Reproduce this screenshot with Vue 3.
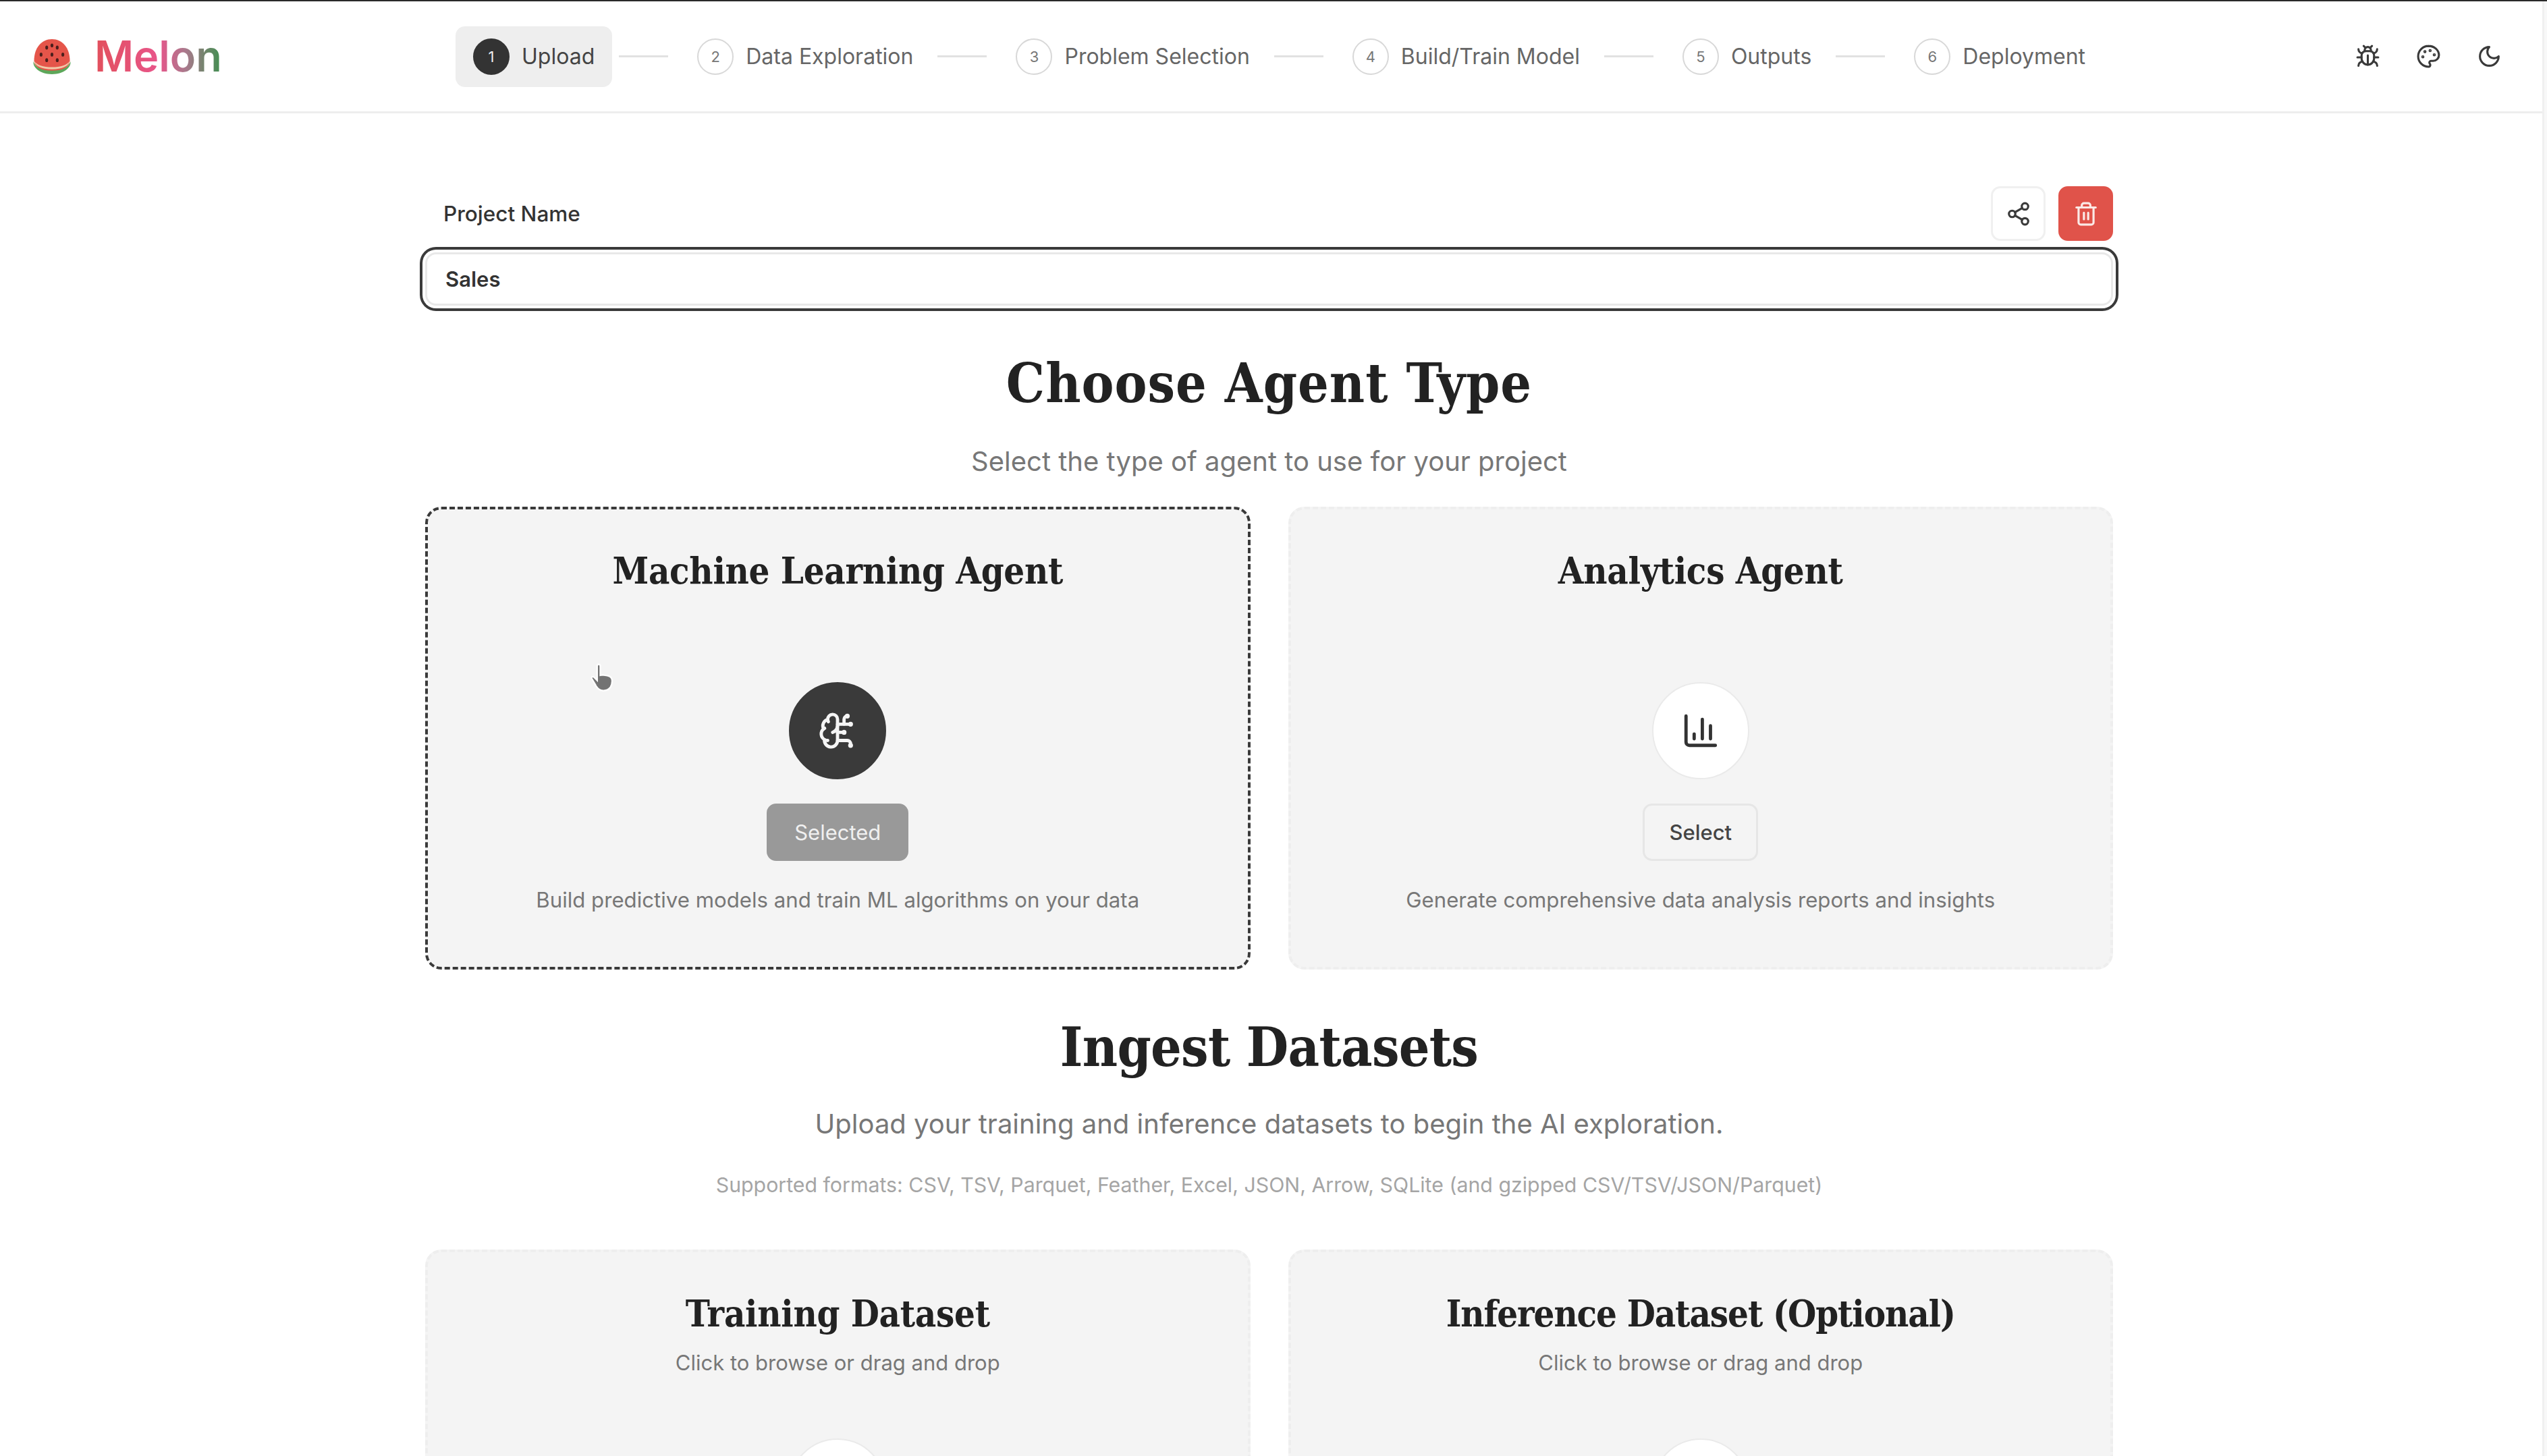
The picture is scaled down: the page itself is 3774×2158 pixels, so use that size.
<template>
  <div class="page">
    <div class="frame">
      <div class="top-strip"></div>
      <header class="header">
        <div class="brand">
          <svg class="brand__icon" viewBox="0 0 55 50">
            <path d="M2 31C2 12 13 0 27.500 0S53 12 53 31c0 8-11 16-25.500 16S2 39 2 31Z" fill="#e5554a" />
            <path d="M1 32c3 9 13 13 26.500 13S51 41 54 32c1 8-9 18-26.500 18S0 40 1 32Z" fill="#5da75a" />
            <path d="M2 31c4 6 13 9 25.500 9S49 37 53 31c-1 7-11 12-25.500 12S3 38 2 31Z" fill="#f0c9a8" />
            <ellipse v-for="seed in seeds" :key="seed.x + '-' + seed.y" :cx="seed.x" :cy="seed.y" rx="2" ry="2.800" fill="#4a1f1c" />
          </svg>
          <span class="brand__name">Melon</span>
        </div>

        <nav class="steps">
          <template v-for="(step, i) in steps" :key="step">
            <div class="step" :class="{ 'step--active': i === 0 }">
              <span class="step__num">{{ i + 1 }}</span>
              <span class="step__label">{{ step }}</span>
            </div>
            <span v-if="i < steps.length - 1" class="step__line"></span>
          </template>
        </nav>

        <div class="header__tools">
          <svg class="icon tool" viewBox="0 0 24 24">
            <path d="m8 2 1.880 1.880" /><path d="M14.120 3.880 16 2" />
            <path d="M9 7.130v-1a3.003 3.003 0 1 1 6 0v1" />
            <path d="M12 20c-3.300 0-6-2.700-6-6v-3a4 4 0 0 1 4-4h4a4 4 0 0 1 4 4v3c0 3.300-2.700 6-6 6" />
            <path d="M12 20v-9" /><path d="M6.530 9C4.600 8.800 3 7.100 3 5" /><path d="M6 13H2" />
            <path d="M3 21c0-2.100 1.700-3.900 3.800-4" /><path d="M20.970 5c0 2.100-1.600 3.800-3.500 4" />
            <path d="M22 13h-4" /><path d="M17.200 17c2.100.1 3.800 1.900 3.800 4" />
          </svg>
          <svg class="icon tool" viewBox="0 0 24 24">
            <circle cx="13.500" cy="6.500" r=".5" fill="currentColor" />
            <circle cx="17.500" cy="10.500" r=".5" fill="currentColor" />
            <circle cx="8.500" cy="7.500" r=".5" fill="currentColor" />
            <circle cx="6.500" cy="12.500" r=".5" fill="currentColor" />
            <path d="M12 2C6.500 2 2 6.500 2 12s4.500 10 10 10c.926 0 1.648-.746 1.648-1.688 0-.437-.18-.835-.437-1.125-.29-.289-.438-.652-.438-1.125a1.640 1.640 0 0 1 1.668-1.668h1.996c3.051 0 5.555-2.503 5.555-5.554C21.965 6.012 17.461 2 11.994 2z" />
          </svg>
          <svg class="icon tool" viewBox="0 0 24 24">
            <path d="M12 3a6 6 0 0 0 9 9 9 9 0 1 1-9-9Z" />
          </svg>
        </div>
      </header>

      <main class="content">
        <div class="project">
          <div class="project__row">
            <label class="project__label">Project Name</label>
            <div class="project__actions">
              <button class="square-btn">
                <svg class="icon icon--share" viewBox="0 0 24 24">
                  <circle cx="18" cy="5" r="3" /><circle cx="6" cy="12" r="3" /><circle cx="18" cy="19" r="3" />
                  <path d="m8.590 13.510 6.830 3.980" /><path d="m15.410 6.510-6.820 3.980" />
                </svg>
              </button>
              <button class="square-btn square-btn--danger">
                <svg class="icon icon--share" viewBox="0 0 24 24">
                  <path d="M3 6h18" /><path d="M19 6v14c0 1-1 2-2 2H7c-1 0-2-1-2-2V6" />
                  <path d="M8 6V4c0-1 1-2 2-2h4c1 0 2 1 2 2v2" />
                  <path d="M10 11v6" /><path d="M14 11v6" />
                </svg>
              </button>
            </div>
          </div>
          <input class="project__input" value="Sales" />
        </div>

        <h1 class="section-title section-title--agent">Choose Agent Type</h1>
        <p class="section-sub">Select the type of agent to use for your project</p>

        <div class="card-grid">
          <div class="card card--selected">
            <h2 class="card__title">Machine Learning Agent</h2>
            <div class="card__circle card__circle--dark">
              <svg class="icon icon--big" viewBox="0 0 24 24">
                <path d="M12 5a3 3 0 1 0-5.997.125 4 4 0 0 0-2.526 5.770 4 4 0 0 0 .556 6.588A4 4 0 1 0 12 18Z" />
                <path d="M9 13a4.500 4.500 0 0 0 3-4" /><path d="M6.003 5.125A3 3 0 0 0 6.401 6.500" />
                <path d="M3.477 10.896a4 4 0 0 1 .585-.396" /><path d="M6 18a4 4 0 0 1-1.967-.516" />
                <path d="M12 13h4" /><path d="M12 18h6a2 2 0 0 1 2 2v1" /><path d="M12 8h8" />
                <path d="M16 8V5a2 2 0 0 1 2-2" />
                <circle cx="16" cy="13" r=".5" /><circle cx="18" cy="3" r=".5" />
                <circle cx="20" cy="21" r=".5" /><circle cx="20" cy="8" r=".5" />
              </svg>
            </div>
            <button class="card__btn card__btn--selected">Selected</button>
            <p class="card__desc">Build predictive models and train ML algorithms on your data</p>
          </div>

          <div class="card">
            <h2 class="card__title">Analytics Agent</h2>
            <div class="card__circle">
              <svg class="icon icon--big" viewBox="0 0 24 24">
                <path d="M3 3v16a2 2 0 0 0 2 2h16" /><path d="M18 17V9" /><path d="M13 17V5" /><path d="M8 17v-3" />
              </svg>
            </div>
            <button class="card__btn">Select</button>
            <p class="card__desc">Generate comprehensive data analysis reports and insights</p>
          </div>
        </div>

        <h1 class="section-title section-title--ingest">Ingest Datasets</h1>
        <p class="section-sub section-sub--second">Upload your training and inference datasets to begin the AI exploration.</p>
        <p class="formats">Supported formats: CSV, TSV, Parquet, Feather, Excel, JSON, Arrow, SQLite (and gzipped CSV/TSV/JSON/Parquet)</p>

        <div class="card-grid card-grid--upload">
          <div v-for="item in uploads" :key="item.title" class="card card--upload">
            <h2 class="card__title" :class="item.titleClass">{{ item.title }}</h2>
            <p class="card__hint">Click to browse or drag and drop</p>
            <div class="card__circle card__circle--upload"></div>
          </div>
        </div>
      </main>

      <svg class="cursor" viewBox="0 0 34 42">
        <path d="M12 3c1.300 0 2 1 2 2.500V17l3-.5 3 .5 3 .5 3 1c2 1 3 3 3 6 0 7-4 12-11 12-5 0-8-3-10-7L3 21c-.8-1.500 1.500-3 3-1.500l4 4V5.500C10 4 10.700 3 12 3Z" fill="#666" stroke="#fff" stroke-width="2" />
      </svg>
    </div>
    <div class="scroll-track"></div>
  </div>
</template>

<script setup>
const steps = ['Upload', 'Data Exploration', 'Problem Selection', 'Build/Train Model', 'Outputs', 'Deployment']
const uploads = [
  { title: 'Training Dataset', titleClass: '' },
  { title: 'Inference Dataset (Optional)', titleClass: 'card__title--tight' }
]
const seeds = [
  { x: 20, y: 12 }, { x: 35, y: 12 }, { x: 27.5, y: 9 },
  { x: 12, y: 22 }, { x: 27.5, y: 22 }, { x: 43, y: 22 },
  { x: 20, y: 30 }, { x: 35, y: 30 }
]
</script>

<style>
html, body {
  margin: 0;
  overflow: hidden;
  background: #fff;
}
</style>

<style scoped>
.page {
  display: flex;
  height: 2158px;
  overflow: hidden;
  font-family: "Inter", "Noto Sans", sans-serif;
  color: #333;
  background: #fff;
}

.frame {
  position: relative;
  flex: 1;
  min-width: 0;
}

.scroll-track {
  width: 4px;
  margin-top: 2px;
  background: #f8f8f8;
  border-left: 3px solid #f0f0f0;
}

.top-strip {
  height: 2px;
  margin-right: -7px;
  background: #2a2a2a;
}

.header {
  display: flex;
  align-items: center;
  height: 163px;
  border-bottom: 3px solid #eeeeee;
  padding: 0 60px 0 48px;
}

.brand {
  display: flex;
  align-items: center;
  gap: 34px;
  width: 627px;
  flex-shrink: 0;
}

.brand__icon {
  width: 58px;
  height: 52px;
}

.brand__name {
  font-size: 63px;
  font-weight: 600;
  line-height: 1;
  background: linear-gradient(90deg, #e2505c 0%, #e8558a 50%, #a87a8c 72%, #3f8f4f 100%);
  -webkit-background-clip: text;
  background-clip: text;
  color: transparent;
}

.steps {
  display: flex;
  align-items: center;
}

.step {
  display: flex;
  align-items: center;
  gap: 18px;
  height: 90px;
  padding: 0 26px;
  border-radius: 14px;
  color: #666;
}

.step--active {
  background: #eeeeee;
  color: #444;
}

.step__num {
  display: flex;
  align-items: center;
  justify-content: center;
  width: 54px;
  height: 54px;
  box-sizing: border-box;
  border: 2px solid #d8d8d8;
  border-radius: 50%;
  font-size: 22px;
  color: #777;
}

.step--active .step__num {
  background: #333;
  border-color: #333;
  color: #eee;
}

.step__label {
  font-size: 32px;
  white-space: nowrap;
}

.step__line {
  width: 73px;
  height: 3px;
  margin: 0 17px 0 10px;
  background: #e2e2e2;
}

.header__tools {
  display: flex;
  align-items: center;
  gap: 53px;
  margin-left: auto;
}

.icon {
  fill: none;
  stroke: currentColor;
  stroke-width: 2;
  stroke-linecap: round;
  stroke-linejoin: round;
}

.tool {
  width: 37px;
  height: 37px;
  color: #3a3a3a;
}

.icon--share {
  width: 38px;
  height: 38px;
}

.icon--big {
  width: 58px;
  height: 58px;
}

.content {
  display: flex;
  flex-direction: column;
  width: 2501px;
  margin: 0 auto;
  padding-top: 108px;
  transform: translateX(-3px);
}

.project__row {
  display: flex;
  align-items: center;
  justify-content: space-between;
  padding-left: 27px;
}

.project__label {
  font-size: 31.500px;
  font-weight: 500;
  color: #333;
}

.project__actions {
  display: flex;
  gap: 19px;
}

.square-btn {
  display: flex;
  align-items: center;
  justify-content: center;
  width: 81px;
  height: 81px;
  padding: 0;
  box-sizing: border-box;
  background: #fff;
  border: 3px solid #f0f0f0;
  border-radius: 14px;
  color: #3a3a3a;
}

.square-btn--danger {
  background: #e0534a;
  border-color: #e0534a;
  color: #fbe9e6;
}

.project__input {
  display: block;
  width: 100%;
  height: 79px;
  margin-top: 17px;
  padding: 0 27px;
  box-sizing: border-box;
  background: #fff;
  border: 3px solid #e8e8e8;
  border-radius: 16px;
  box-shadow: 0 0 0 4px #fff, 0 0 0 8px #3a3a3a;
  outline: none;
  font-family: inherit;
  font-size: 31px;
  font-weight: 600;
  color: #333;
}

.section-title {
  margin: 65px 0 0;
  font-family: "DejaVu Serif", "Liberation Serif", serif;
  font-size: 80px;
  font-weight: 700;
  line-height: 100px;
  text-align: center;
  color: #222;
  font-stretch: condensed;
}

.section-title--agent {
  letter-spacing: 1px;
}

.section-title--ingest {
  letter-spacing: -0.7px;
}

.section-sub {
  margin: 38px 0 0;
  font-size: 40px;
  line-height: 56px;
  text-align: center;
  color: #777;
}

.section-sub--second {
  margin-top: 36px;
}

.formats {
  margin: 40px 0 0;
  font-size: 30.300px;
  line-height: 44px;
  text-align: center;
  color: #a5a5a5;
}

.card-grid {
  display: grid;
  grid-template-columns: 1fr 1fr;
  gap: 56px;
  margin-top: 39px;
}

.card-grid--upload {
  margin-top: 74px;
}

.card {
  display: flex;
  flex-direction: column;
  align-items: center;
  height: 686px;
  padding-top: 56px;
  box-sizing: border-box;
  background: #f4f4f4;
  border: 4px dashed #eeeeee;
  border-radius: 24px;
}

.card--selected {
  border-color: #3a3a3a;
}

.card--upload {
  height: 600px;
}

.card__title {
  margin: 0;
  font-family: "DejaVu Serif", "Liberation Serif", serif;
  font-size: 54px;
  font-weight: 700;
  line-height: 70px;
  letter-spacing: -0.3px;
  color: #222;
  font-stretch: condensed;
}

.card__title--tight {
  letter-spacing: -1.1px;
}

.card__circle {
  display: flex;
  align-items: center;
  justify-content: center;
  width: 144px;
  height: 144px;
  margin-top: 130px;
  box-sizing: border-box;
  background: #fff;
  border: 2px solid #eaeaea;
  border-radius: 50%;
  color: #333;
}

.card__circle--dark {
  background: #3a3a3a;
  border-color: #3a3a3a;
  color: #f5f5f5;
}

.card__circle--upload {
  margin-top: 88px;
}

.card__btn {
  height: 85px;
  margin-top: 36px;
  padding: 0 36px;
  background: #f4f4f4;
  border: 3px solid #e6e6e6;
  border-radius: 14px;
  font-family: inherit;
  font-size: 31px;
  font-weight: 500;
  color: #444;
}

.card__btn--selected {
  padding: 0 38px;
  background: #999;
  border-color: #999;
  color: #f0f0f0;
  font-weight: 400;
}

.card__desc {
  margin: 34px 0 0;
  font-size: 31.200px;
  line-height: 48px;
  color: #777;
}

.card__hint {
  margin: 14px 0 0;
  font-size: 31px;
  line-height: 48px;
  color: #777;
}

/* screen recording caught the pointer here */
.cursor {
  position: absolute;
  left: 873px;
  top: 981px;
  width: 40px;
  height: 49px;
  opacity: 0.9;
}
</style>
